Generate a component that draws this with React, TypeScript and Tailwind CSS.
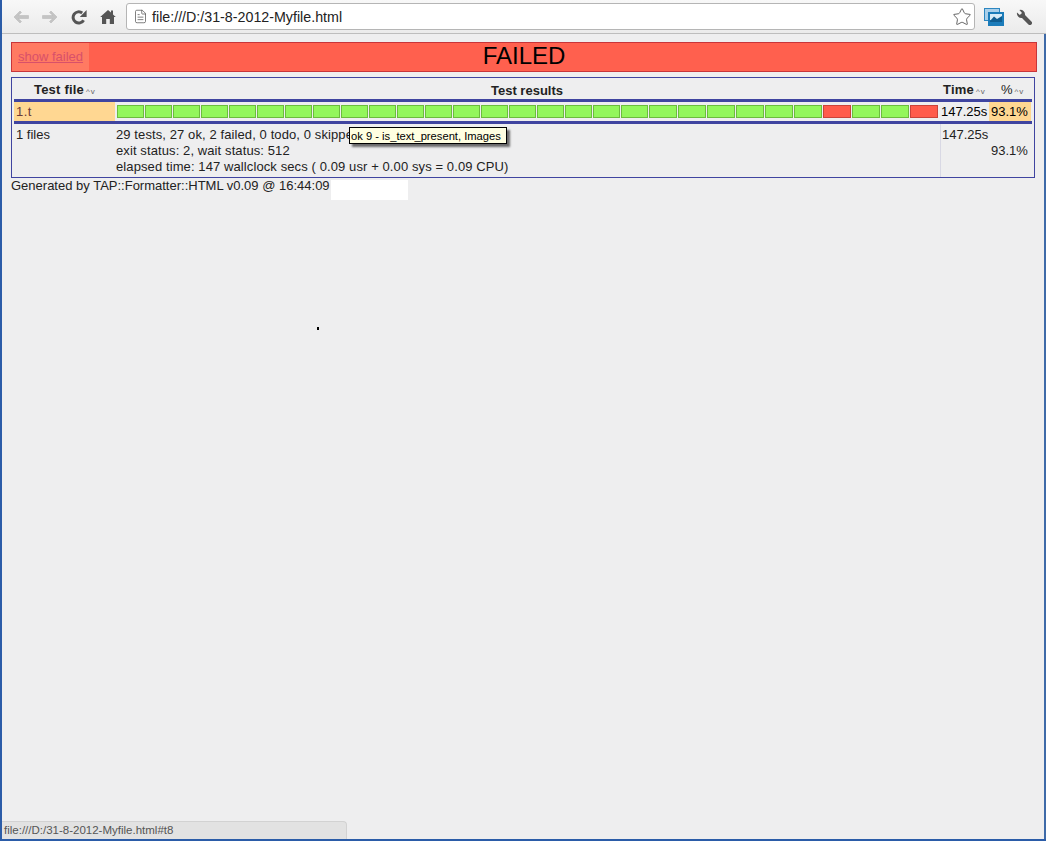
import React from 'react';
import { FileText, Star } from 'lucide-react';

const failed = [25, 28];
const results = Array.from({ length: 29 }, (_, i) => i);

const SortArrows = () => (
  <span className="ml-[2px] text-[8px] font-normal tracking-[1px] text-[#666]">^v</span>
);

const App: React.FC = () => {
  return (
    <div className="relative flex h-[841px] w-[1046px] flex-col overflow-hidden border-b-[2px] border-l-[2px] border-[#2b5ca8] bg-[#eeeeef] font-['Liberation_Sans',Arial,sans-serif] text-[13px] leading-[16px] text-[#222]">
      {/* browser toolbar */}
      <div className="flex h-[34px] shrink-0 items-center border-b border-[#bdbdbd] bg-gradient-to-b from-[#f8f8f8] to-[#ebebeb] pl-[11px]">
        <svg width="16" height="14" viewBox="0 0 16 14">
          <path d="M7 1 L1 7 L7 13 L8.5 11.5 L5.2 8.5 L15.5 8.5 L15.5 5.5 L5.2 5.5 L8.5 2.5 Z" fill="#c4c4c4" stroke="#b4b4b4" strokeWidth="0.5" />
        </svg>
        <svg width="16" height="14" viewBox="0 0 16 14" className="ml-[13px]">
          <path d="M9 1 L15 7 L9 13 L7.5 11.5 L10.8 8.5 L0.5 8.5 L0.5 5.5 L10.8 5.5 L7.5 2.5 Z" fill="#c4c4c4" stroke="#b4b4b4" strokeWidth="0.5" />
        </svg>
        <svg width="16" height="16" viewBox="0 0 16 16" className="ml-[13px]">
          <path d="M12.6 11.2 A5.6 5.6 0 1 1 11.2 4" fill="none" stroke="#555" strokeWidth="3" />
          <path d="M15.6 1 L15.6 8 L8.8 8 Z" fill="#555" />
        </svg>
        <svg width="16" height="16" viewBox="0 0 16 16" className="ml-[13px]">
          <path d="M8 1 L11 3.6 L11 1.5 L13 1.5 L13 5.4 L15.8 8 L14 8 L14 15 L9.8 15 L9.8 10 L6.2 10 L6.2 15 L2 15 L2 8 L0.2 8 Z" fill="#555" />
        </svg>
        <div className="ml-[10px] flex h-[27px] w-[849px] items-center rounded-[3px] border border-[#b5b5b5] bg-white pl-[6px] pr-[2px]">
          <FileText size={15} strokeWidth={1.2} className="text-[#555]" />
          <span className="ml-[4px] text-[14.25px] text-[#222]">file:///D:/31-8-2012-Myfile.html</span>
          <Star size={20} strokeWidth={1.2} className="ml-auto text-[#666]" />
        </div>
        <svg width="20" height="18" viewBox="0 0 20 18" className="ml-[9px]">
          <rect x="0.5" y="0.5" width="15" height="12" fill="#a9cfea" stroke="#2c86c0" />
          <rect x="4" y="4" width="16" height="14" fill="#1b7cba" />
          <rect x="6" y="6" width="12" height="6" fill="#d7ebf7" />
          <path d="M6 13 L10 8.5 L13 11 L18 8 L18 14 L6 14 Z" fill="#0f5d91" />
        </svg>
        <svg width="16" height="16" viewBox="0 0 16 16" className="ml-[12px]">
          <path d="M1 3.5 L3.8 6 L6 4 L3.4 1 A4.6 4.6 0 0 1 9 6 L15.4 12.4 A2 2 0 0 1 12.4 15.4 L6 9 A4.6 4.6 0 0 1 1 3.5 Z" fill="#555" />
        </svg>
      </div>

      <div className="flex flex-1 flex-col border-r-[2px] border-[#3e6aa8] pl-[9px] pt-[8px]">
        {/* status banner */}
        <div className="flex h-[30px] w-[1026px] items-stretch border border-[#c8353a] bg-[#ff604e]">
          <div className="flex w-[77px] items-center bg-[#ff7a62] pl-[6px]">
            <a className="text-[#d8506a] underline">show failed</a>
          </div>
          <span className="flex-1 pr-[77px] text-center text-[24px] leading-[26px] text-black">FAILED</span>
        </div>

        {/* results table */}
        <div className="mt-[5px] flex h-[101px] w-[1024px] flex-col border border-[#3f44a0] px-[2px]">
          <div className="flex h-[21px] shrink-0 items-center pt-[4px] font-bold">
            <div className="w-[101px] pl-[20px] tracking-[0.2px]">Test file<SortArrows /></div>
            <div className="flex-1 pr-[2px] text-center">Test results</div>
            <div className="w-[49px] pl-[2px] tracking-[0.2px]">Time<SortArrows /></div>
            <div className="w-[42px] pl-[11px] font-normal">%<SortArrows /></div>
          </div>
          <div className="flex h-[25px] shrink-0 border-y-[3px] border-[#3f44a0]">
            <div className="w-[101px] bg-[#ffd792] pl-[2px] pt-[2px] tracking-[0.5px] text-[#6b3a3a]">1.t</div>
            <div className="flex w-[825px] items-center gap-[1px] pl-[2px]">
              {results.map((i) => (
                <div
                  key={i}
                  className={`h-[13px] border ${i < 19 ? 'w-[27px]' : 'w-[28px]'} ${failed.includes(i)
                    ? 'border-[#c9433a] bg-[#ff5b4b]'
                    : 'border-[#6cbb3e] bg-[#93f65c]'}`}
                />
              ))}
            </div>
            <div className="w-[49px] pl-[1px] pt-[2px] text-black">147.25s</div>
            <div className="w-[42px] bg-[#ffd792] pl-[2px] pt-[2px] text-black">93.1%</div>
          </div>
          <div className="flex flex-1">
            <div className="w-[101px] pl-[2px] pt-[3px]">1 files</div>
            <div className="w-[825px] pl-[1px] pt-[3px] tracking-[0.1px]">
              <div>29 tests, 27 ok, 2 failed, 0 todo, 0 skipped</div>
              <div>exit status: 2, wait status: 512</div>
              <div>elapsed time: 147 wallclock secs ( 0.09 usr + 0.00 sys = 0.09 CPU)</div>
            </div>
            <div className="w-[49px] border-l border-[#d8d8e4] pl-[1px] pt-[3px]">147.25s</div>
            <div className="w-[42px] pl-[2px] pt-[19px]">93.1%</div>
          </div>
        </div>

        {/* footer */}
        <div className="flex h-[22px] items-start">
          <span>Generated by TAP::Formatter::HTML v0.09 @ 16:44:09</span>
          <div className="ml-[1px] mt-[2px] h-[20px] w-[77px] bg-white" />
        </div>
      </div>

      {/* tooltip from hovered result */}
      <div className="absolute left-[347px] top-[127px] h-[17px] whitespace-nowrap border border-black bg-[#ffffe1] pl-[1px] pr-[5px] pt-[1px] text-[11.2px] leading-[15px] text-black shadow-[3px_3px_2px_rgba(0,0,0,0.55)]">
        ok 9 - is_text_present, Images
      </div>

      {/* stray pointer speck */}
      <div className="absolute left-[315px] top-[327px] h-[3px] w-[2px] bg-black" />

      {/* hover status bubble */}
      <div className="absolute bottom-0 left-0 h-[18px] w-[345px] rounded-tr-[4px] border-r border-t border-[#d2d2d2] bg-[#e2e2e2] pl-[2px] text-[11.5px] leading-[17px] text-[#555]">
        file:///D:/31-8-2012-Myfile.html#t8
      </div>
    </div>
  );
};

export default App;
